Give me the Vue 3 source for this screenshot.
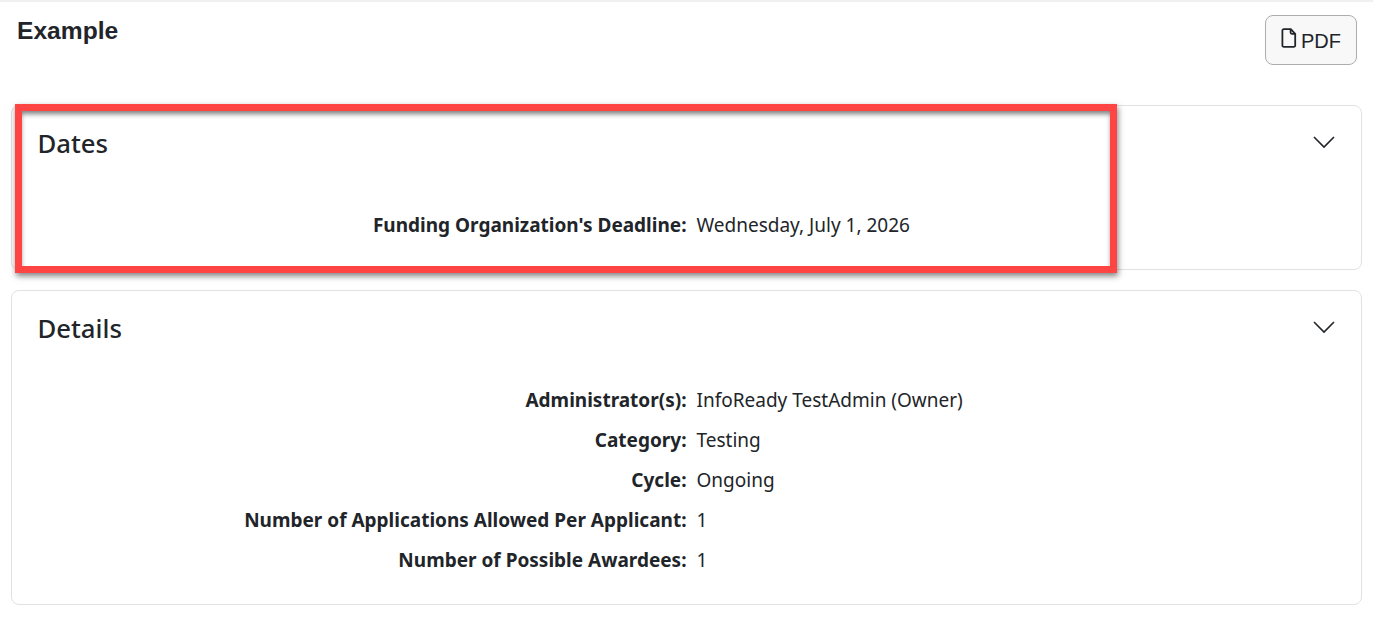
<template>
  <div class="page">
    <div class="top-line"></div>
    <div class="page-header">
      <h1 class="page-title">Example</h1>
      <button class="pdf-button">
        <svg class="pdf-icon" viewBox="0 0 16 20" width="16" height="20" fill="none" stroke="#212529" stroke-width="1.8">
          <path d="M2.8 1.2h7l4.4 4.6v11.6a1.4 1.4 0 0 1-1.4 1.4H2.8a1.4 1.4 0 0 1-1.4-1.4V2.6a1.4 1.4 0 0 1 1.4-1.4z" />
          <path d="M9.6 1.2v3.4a1.2 1.2 0 0 0 1.2 1.2h3.4" />
        </svg>
        <span>PDF</span>
      </button>
    </div>

    <section v-for="card in cards" :key="card.title" class="card" :class="card.cls">
      <div class="card-head">
        <h2 class="card-title">{{ card.title }}</h2>
        <svg class="chevron" viewBox="0 0 24 14" width="24" height="14" fill="none" stroke="#212529" stroke-width="1.6">
          <path d="M2 2l10 10L22 2" />
        </svg>
      </div>
      <div class="rows">
        <div v-for="row in card.rows" :key="row.label" class="row">
          <div class="label">{{ row.label }}:</div>
          <div class="value">{{ row.value }}</div>
        </div>
      </div>
    </section>

    <div class="highlight"></div>
  </div>
</template>

<script setup>
const cards = [
  {
    title: 'Dates',
    cls: 'dates',
    rows: [{ label: "Funding Organization's Deadline", value: 'Wednesday, July 1, 2026' }]
  },
  {
    title: 'Details',
    cls: 'details',
    rows: [
      { label: 'Administrator(s)', value: 'InfoReady TestAdmin (Owner)' },
      { label: 'Category', value: 'Testing' },
      { label: 'Cycle', value: 'Ongoing' },
      { label: 'Number of Applications Allowed Per Applicant', value: '1' },
      { label: 'Number of Possible Awardees', value: '1' }
    ]
  }
]
</script>

<style>
html,
body {
  margin: 0;
  background: #fff;
  overflow: hidden;
}
</style>

<style scoped>
.page {
  position: relative;
  height: 625px;
  padding: 0 11px;
  box-sizing: border-box;
  background: #fff;
  color: #212529;
  font-family: "Noto Sans", "Open Sans", sans-serif;
}

.top-line {
  height: 2px;
  margin: 0 -11px;
  background: #f0f0f0;
}

.page-header {
  display: flex;
  justify-content: space-between;
  align-items: flex-start;
  height: 103px;
  padding: 14px 5px 0 6px;
  box-sizing: border-box;
}

.page-title {
  margin: 0;
  font-family: "Liberation Sans", Arial, sans-serif;
  font-size: 24.6px;
  font-weight: bold;
  line-height: 30px;
}

.pdf-button {
  display: flex;
  align-items: center;
  justify-content: center;
  gap: 4px;
  width: 92px;
  height: 50px;
  margin-top: -1px;
  padding: 0;
  background: #f8f8f8;
  border: 1px solid #adadad;
  border-radius: 8px;
  color: #212529;
  font-family: "Liberation Sans", Arial, sans-serif;
  font-size: 20px;
}

.pdf-button span {
  padding-top: 2px;
}

.pdf-icon {
  margin-top: -4px;
}

.card {
  box-sizing: border-box;
  width: 1351px;
  border: 1px solid #e2e2e6;
  border-radius: 8px;
  padding: 0 25px 0 25.5px;
}

.dates {
  height: 165px;
  margin-bottom: 20px;
}

.details {
  height: 315px;
}

.card-head {
  display: flex;
  justify-content: space-between;
  align-items: flex-start;
  height: 99px;
  padding-top: 20px;
  box-sizing: border-box;
}

.details .card-head {
  height: 89px;
}

.card-title {
  margin: 0;
  font-size: 25.7px;
  font-weight: 500;
  line-height: 36px;
}

.chevron {
  margin: 9px 0 0 0;
}

.row {
  display: flex;
  height: 40px;
  line-height: 40px;
  font-size: 19px;
}

.label {
  width: 649px;
  text-align: right;
  font-weight: 700;
}

.value {
  margin-left: 10px;
}

.highlight {
  position: absolute;
  left: 15px;
  top: 104px;
  width: 1102px;
  height: 169px;
  box-sizing: border-box;
  border: 7px solid #ff4444;
  box-shadow: 1px 3px 6px rgba(0, 0, 0, 0.5), inset 0 4px 5px -1px rgba(0, 0, 0, 0.5);
}
</style>
